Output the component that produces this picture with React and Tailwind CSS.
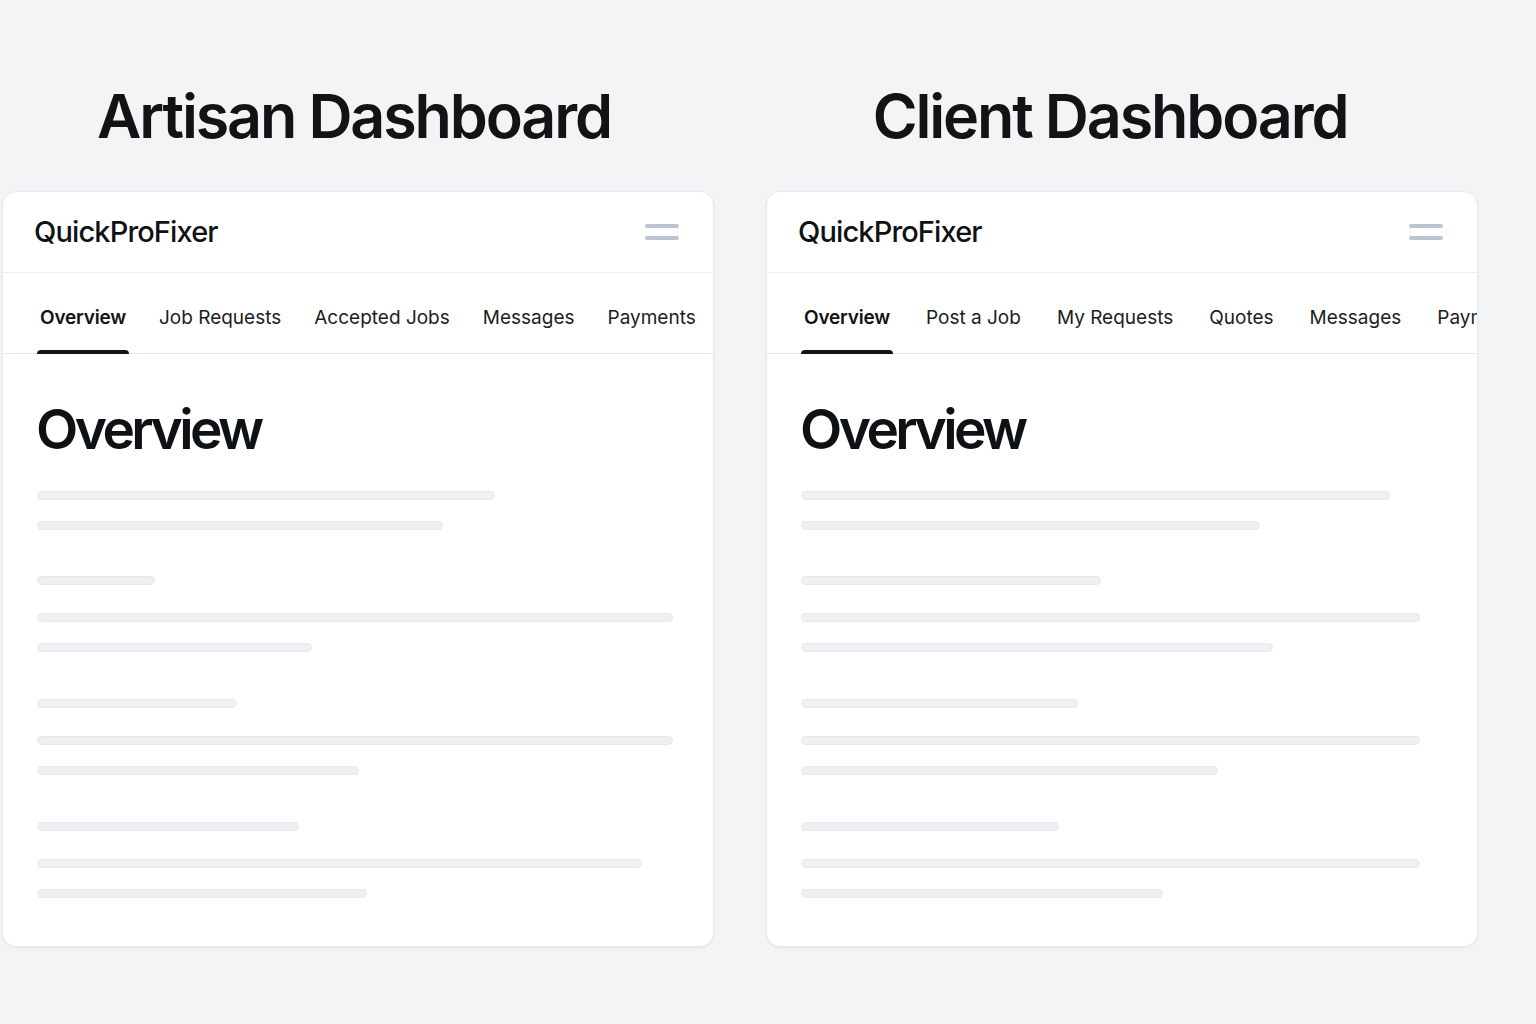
import React from 'react'

const dashboards = [
  {
    title: 'Artisan Dashboard',
    titlePad: 'pr-[8px]',
    tabGap: 'gap-[27px]',
    tabs: ['Overview', 'Job Requests', 'Accepted Jobs', 'Messages', 'Payments'],
    intro: [458, 406],
    sections: [
      [118, 636, 275],
      [200, 636, 322],
      [262, 605, 330],
    ],
  },
  {
    title: 'Client Dashboard',
    titlePad: 'pr-[24px]',
    tabGap: 'gap-[30px]',
    tabs: ['Overview', 'Post a Job', 'My Requests', 'Quotes', 'Messages', 'Payments'],
    intro: [589, 459],
    sections: [
      [300, 619, 472],
      [277, 619, 417],
      [258, 619, 362],
    ],
  },
]

const Bar = ({ width, className = '' }) => (
  <div
    className={`h-[9px] rounded-full bg-[#eef0f3] border border-[#e6e9ed] ${className}`}
    style={{ width }}
  />
)

const DashboardCard = ({ tabs, tabGap, intro, sections }) => {
  return (
    <div className="w-[712px] bg-white rounded-[14px] border border-[#e7e9ed] shadow-[0_1px_3px_rgba(15,23,42,0.06)] overflow-hidden">
      <div className="h-[81px] flex items-center justify-between pl-[31px] pr-[34px] border-b border-[#eceef1]">
        <span className="text-[29px] font-medium tracking-[-0.03em] text-[#0f1215]">QuickProFixer</span>
        <div className="flex flex-col gap-[8px]">
          <span className="block w-[34px] h-[4px] rounded-full bg-[#bcc5cf]" />
          <span className="block w-[34px] h-[4px] rounded-full bg-[#bcc5cf]" />
        </div>
      </div>
      <div className={`h-[81px] flex items-stretch ${tabGap} pl-[34px] border-b border-[#e6e9ed] whitespace-nowrap`}>
        {tabs.map((tab, i) => (
          <div key={tab} className="relative flex items-center pt-[11px] px-[3px] shrink-0">
            <span
              className={
                i === 0
                  ? 'text-[19px] font-semibold tracking-[-0.01em] text-[#111315]'
                  : 'text-[19px] font-normal text-[#1a1d21]'
              }
            >
              {tab}
            </span>
            {i === 0 && (
              <span className="absolute left-0 right-0 -bottom-px h-[4px] rounded-t-full bg-[#111315]" />
            )}
          </div>
        ))}
      </div>
      <div className="pl-[34px] pt-[48px] pb-[48px]">
        <h2 className="-ml-[1px] text-[55px] leading-none font-semibold tracking-[-0.065em] text-[#0f1215]">Overview</h2>
        <div className="mt-[34px] flex flex-col gap-[21px]">
          {intro.map((w, i) => (
            <Bar key={i} width={w} />
          ))}
        </div>
        {sections.map((s, i) => (
          <div key={i} className={i === 0 ? 'mt-[46px]' : 'mt-[47px]'}>
            <Bar width={s[0]} />
            <Bar width={s[1]} className="mt-[28px]" />
            <Bar width={s[2]} className="mt-[21px]" />
          </div>
        ))}
      </div>
    </div>
  )
}

export default function App() {
  return (
    <div
      className="min-h-screen w-[1536px] h-[1024px] bg-[#f3f4f6] pl-[2px] pt-[80px] overflow-hidden"
      style={{ fontFamily: 'Inter, "Noto Sans", sans-serif' }}
    >
      <div className="flex gap-[52px]">
        {dashboards.map((d) => (
          <div key={d.title} className="flex flex-col">
            <h1
              className={`h-[111px] pt-[6px] text-center text-[61px] leading-none font-semibold tracking-[-0.035em] text-[#111315] ${d.titlePad}`}
            >
              {d.title}
            </h1>
            <DashboardCard {...d} />
          </div>
        ))}
      </div>
    </div>
  )
}
